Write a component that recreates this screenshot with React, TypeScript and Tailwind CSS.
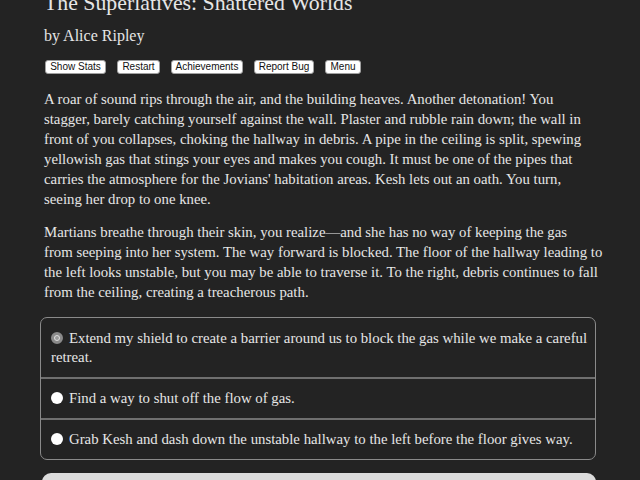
import React from 'react'

const buttons = [
  { label: 'Show Stats', w: 'w-[61px]' },
  { label: 'Restart', w: 'w-[43px]' },
  { label: 'Achievements', w: 'w-[72px]' },
  { label: 'Report Bug', w: 'w-[60px]' },
  { label: 'Menu', w: 'w-[36px]' },
]

const choices = [
  'Extend my shield to create a barrier around us to block the gas while we make a careful retreat.',
  'Find a way to shut off the flow of gas.',
  'Grab Kesh and dash down the unstable hallway to the left before the floor gives way.',
]

export default function App() {
  return (
    <div
      className="min-h-[480px] h-[480px] overflow-hidden bg-[#232323] text-[#e6e6e6]"
      style={{ fontFamily: '"Liberation Serif", "DejaVu Serif", serif' }}
    >
      <div className="w-[560px] ml-[44px] -mt-[12px]">
        <h1 className="text-[21.8px] leading-[30px] m-0">The Superlatives: Shattered Worlds</h1>
        <h2 className="text-[16px] leading-[22px] mt-[7px]">by Alice Ripley</h2>

        <div className="flex gap-[11px] mt-[13px] ml-[1px]">
          {buttons.map((b) => (
            <button
              key={b.label}
              className={`${b.w} h-[14px] p-0 bg-white text-[#111] border border-[#a0a0a0] rounded-[3px] text-[10px] leading-[12px] text-center`}
              style={{ fontFamily: '"Liberation Sans", Arial, sans-serif' }}
            >
              {b.label}
            </button>
          ))}
        </div>

        <div className="text-[14.8px] leading-[20px] mt-[15px]">
          <p className="w-[552px]">
            A roar of sound rips through the air, and the building heaves. Another detonation! You stagger,
            barely catching yourself against the wall. Plaster and rubble rain down; the wall in front of you
            collapses, choking the hallway in debris. A pipe in the ceiling is split, spewing yellowish gas that
            stings your eyes and makes you cough. It must be one of the pipes that carries the atmosphere for
            the Jovians' habitation areas. Kesh lets out an oath. You turn, seeing her drop to one knee.
          </p>
          <p className="w-[560px] mt-[13px]">
            Martians breathe through their skin, you realize—and she has no way of keeping the gas
            <br />
            from seeping into her system. The way forward is blocked. The floor of the hallway leading to the
            left looks unstable, but you may be able to traverse it. To the right, debris continues to fall from
            the ceiling, creating a treacherous path.
          </p>
        </div>
      </div>

      <div className="w-[556px] ml-[40px] mt-[15px] border border-[#8a8a8a] rounded-[7px] text-[14.8px] leading-[19px]">
        {choices.map((c, i) => (
          <div
            key={c}
            className={`pl-[10px] pr-[4px] ${i === 0 ? 'pt-[11px] pb-[10px]' : 'py-[10px] border-t-2 border-[#6f6f6f]'}`}
          >
            <span
              className={`inline-block align-[-1px] w-[12px] h-[12px] rounded-full mr-[6px] ${
                i === 0 ? 'bg-[#9a9a9a] border-[3px] border-[#8a8a8a] shadow-[inset_0_0_0_1px_#ddd]' : 'bg-white'
              }`}
            />
            {c}
          </div>
        ))}
      </div>

      <div className="w-[554px] ml-[42px] mt-[13px] h-[40px] bg-[#dcdcdc] rounded-[9px]" />
    </div>
  )
}
